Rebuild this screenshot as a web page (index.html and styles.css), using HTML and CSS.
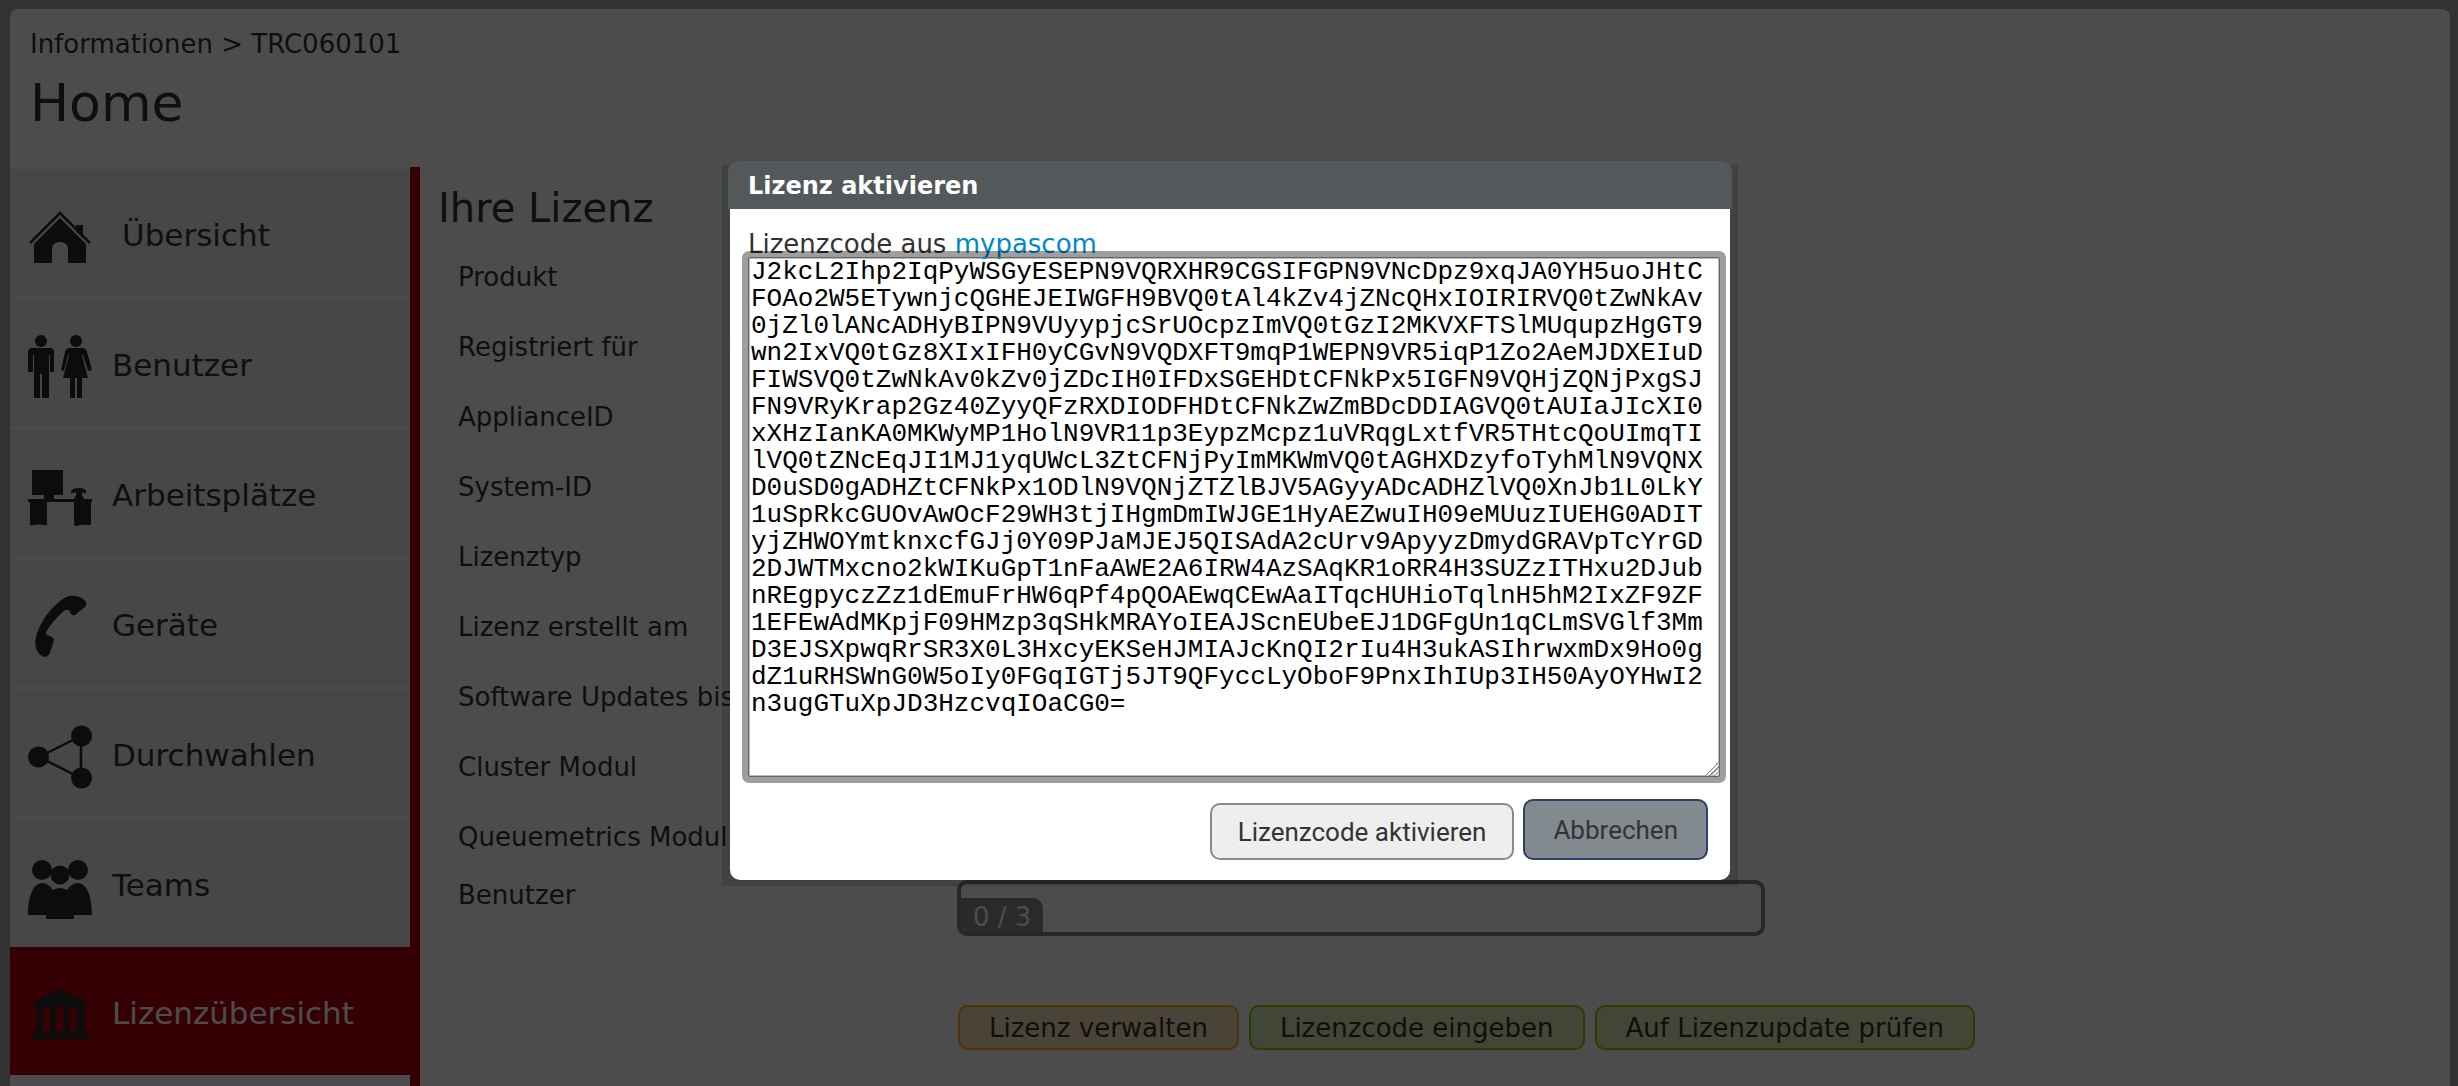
FILE: index.html
```html
<!DOCTYPE html>
<html lang="de">
<head>
<meta charset="utf-8">
<title>Lizenzübersicht</title>
<link rel="stylesheet" href="styles.css">
</head>
<body>
<div class="panel">
  <header class="page-head">
    <p class="breadcrumb">Informationen &gt; TRC060101</p>
    <h1 class="page-title">Home</h1>
  </header>
  <div class="columns">
    <nav class="sidebar">
      <a class="nav-item nav-home" href="#">
        <svg class="icon" viewBox="0 0 64 64"><path d="M2 38 32 8 62 38" fill="none" stroke="currentColor" stroke-width="2.5"/><path d="M6 39 32 13l7 7 19 19v19H40V44c0-4-3-7-8-7s-8 3-8 7v14H6z"/><path d="M48 20h7v13l-7-7z"/></svg>
        <span class="nav-text">Übersicht</span>
      </a>
      <a class="nav-item" href="#">
        <svg class="icon" viewBox="0 0 64 64"><circle cx="13" cy="6" r="6"/><path d="M4 13h18q4 0 4 4v20h-4V20h-1v43h-7V39h-2v24H6V20H5v17H0V17q0-4 4-4z"/><circle cx="48" cy="6" r="6"/><path d="M42 13h12q4 0 5 4l5 18-4 1-5-16h-1l6 23h-6v20h-5V43h-2v20h-5V43h-7l6-23h-1l-4 16-3-1 4-18q1-4 5-4z"/></svg>
        <span class="nav-text">Benutzer</span>
      </a>
      <a class="nav-item" href="#">
        <svg class="icon" viewBox="0 0 64 64"><path d="M4 5h31v25h-9v4h38v3h-1v22q-1 2-3 1-6-1-11 1-3 0-3-2V37H19v22q0 2-3 1-5-1-11 0-3 1-3-1V37H0v-3h16v-4H4z"/><path d="M43 26c1-2 4-3 8-3s6 1 7 3v2h-3l-1-2v4l2 4H46l2-4v-4l-1 2h-4z"/></svg>
        <span class="nav-text">Arbeitsplätze</span>
      </a>
      <a class="nav-item" href="#">
        <svg class="icon" viewBox="0 0 64 64"><path d="M41 1c7-1 14 1 17 6q1 3-1 5l-10 8q-3 1-4-1l-2-4h-4C30 21 20 32 18 38l1 2 5 2q2 1 2 3l-4 13q-2 4-6 4C8 59 6 50 8 42 12 26 27 6 41 1z"/></svg>
        <span class="nav-text">Geräte</span>
      </a>
      <a class="nav-item" href="#">
        <svg class="icon" viewBox="0 0 64 64"><path d="M53 11 11 32l42 21z" fill="none" stroke="currentColor" stroke-width="2.5"/><circle cx="53.500" cy="11" r="10.500"/><circle cx="10.500" cy="32" r="10.500"/><circle cx="53.500" cy="53" r="10.500"/></svg>
        <span class="nav-text">Durchwahlen</span>
      </a>
      <a class="nav-item" href="#">
        <svg class="icon" viewBox="0 0 64 64"><circle cx="14" cy="15" r="10"/><circle cx="50" cy="15" r="10"/><circle cx="32" cy="20" r="9.500"/><path d="M0 60C0 42 5 28 14 28c5 0 8 3 11 7q7-4 14 0c3-4 6-7 11-7 9 0 14 14 14 32H46v4H18v-4z"/></svg>
        <span class="nav-text">Teams</span>
      </a>
      <a class="nav-item nav-active" href="#" aria-current="page">
        <svg class="icon" viewBox="0 0 64 64"><path fill-rule="evenodd" d="M32 6 60 20v1l-4 2v23l5 8v2H3v-2l6-8V23l-5-2v-1zM18.500 24q-4 0-4 4v18q0 4 4 4t4-4V28q0-4-4-4zm13.500 0q-4 0-4 4v18q0 4 4 4t4-4V28q0-4-4-4zm13 0q-4 0-4 4v18q0 4 4 4t4-4V28q0-4-4-4z"/></svg>
        <span class="nav-text">Lizenzübersicht</span>
      </a>
    </nav>
    <main class="content">
      <h2 class="section-title">Ihre Lizenz</h2>
      <dl class="details">
        <dt>Produkt</dt>
        <dt>Registriert für</dt>
        <dt>ApplianceID</dt>
        <dt>System-ID</dt>
        <dt>Lizenztyp</dt>
        <dt>Lizenz erstellt am</dt>
        <dt>Software Updates bis</dt>
        <dt>Cluster Modul</dt>
        <dt>Queuemetrics Modul</dt>
      </dl>
      <div class="usage">
        <span class="usage-label">Benutzer</span>
        <div class="usage-bar"><span class="usage-count">0 / 3</span></div>
      </div>
      <div class="actions">
        <button class="action action-manage" type="button">Lizenz verwalten</button>
        <button class="action" type="button">Lizenzcode eingeben</button>
        <button class="action" type="button">Auf Lizenzupdate prüfen</button>
      </div>
    </main>
  </div>
</div>
<div class="overlay">
  <section class="dialog" role="dialog" aria-labelledby="dialog-title">
    <h2 class="dialog-title" id="dialog-title">Lizenz aktivieren</h2>
    <form class="dialog-body">
      <p class="dialog-text"><label for="code">Lizenzcode aus</label> <a class="link" href="#">mypascom</a></p>
      <textarea class="code" id="code" spellcheck="false">J2kcL2Ihp2IqPyWSGyESEPN9VQRXHR9CGSIFGPN9VNcDpz9xqJA0YH5uoJHtC
FOAo2W5ETywnjcQGHEJEIWGFH9BVQ0tAl4kZv4jZNcQHxIOIRIRVQ0tZwNkAv
0jZl0lANcADHyBIPN9VUyypjcSrUOcpzImVQ0tGzI2MKVXFTSlMUqupzHgGT9
wn2IxVQ0tGz8XIxIFH0yCGvN9VQDXFT9mqP1WEPN9VR5iqP1Zo2AeMJDXEIuD
FIWSVQ0tZwNkAv0kZv0jZDcIH0IFDxSGEHDtCFNkPx5IGFN9VQHjZQNjPxgSJ
FN9VRyKrap2Gz40ZyyQFzRXDIODFHDtCFNkZwZmBDcDDIAGVQ0tAUIaJIcXI0
xXHzIanKA0MKWyMP1HolN9VR11p3EypzMcpz1uVRqgLxtfVR5THtcQoUImqTI
lVQ0tZNcEqJI1MJ1yqUWcL3ZtCFNjPyImMKWmVQ0tAGHXDzyfoTyhMlN9VQNX
D0uSD0gADHZtCFNkPx1ODlN9VQNjZTZlBJV5AGyyADcADHZlVQ0XnJb1L0LkY
1uSpRkcGUOvAwOcF29WH3tjIHgmDmIWJGE1HyAEZwuIH09eMUuzIUEHG0ADIT
yjZHWOYmtknxcfGJj0Y09PJaMJEJ5QISAdA2cUrv9ApyyzDmydGRAVpTcYrGD
2DJWTMxcno2kWIKuGpT1nFaAWE2A6IRW4AzSAqKR1oRR4H3SUZzITHxu2DJub
nREgpyczZz1dEmuFrHW6qPf4pQOAEwqCEwAaITqcHUHioTqlnH5hM2IxZF9ZF
1EFEwAdMKpjF09HMzp3qSHkMRAYoIEAJScnEUbeEJ1DGFgUn1qCLmSVGlf3Mm
D3EJSXpwqRrSR3X0L3HxcyEKSeHJMIAJcKnQI2rIu4H3ukASIhrwxmDx9Ho0g
dZ1uRHSWnG0W5oIy0FGqIGTj5JT9QFyccLyOboF9PnxIhIUp3IH50AyOYHwI2
n3ugGTuXpJD3HzcvqIOaCG0=</textarea>
      <div class="dialog-actions">
        <button class="btn btn-light" type="button">Lizenzcode aktivieren</button>
        <button class="btn btn-dark" type="button">Abbrechen</button>
      </div>
    </form>
  </section>
</div>
</body>
</html>
```
FILE: styles.css
```css
* {
  box-sizing: border-box;
}

body {
  margin: 0;
  height: 100vh;
  overflow: hidden;
  background: #a7a7a7;
  color: #333;
  font-family: "DejaVu Sans", Verdana, sans-serif;
  font-size: 26px;
  line-height: 30px;
}

h1, h2, p, dl {
  margin: 0;
  font-weight: normal;
}

.panel {
  display: flex;
  flex-direction: column;
  min-height: 100vh;
  margin: 9px 8px 0 10px;
  background: #fff;
  border-radius: 8px;
}

.page-head {
  height: 158px;
  padding: 20px;
}

.page-title {
  margin-top: 14px;
  font-size: 52px;
  line-height: 60px;
}

.columns {
  display: flex;
  flex: 1;
}

.sidebar {
  width: 410px;
  flex: none;
  padding-top: 2px;
  border-right: 10px solid #b30010;
}

.nav-item {
  display: flex;
  align-items: center;
  gap: 20px;
  height: 128px;
  margin-bottom: 2px;
  padding: 8px 18px 0;
  background: #eee;
  color: #333;
  font-size: 31px;
  text-decoration: none;
}

.nav-home {
  gap: 30px;
}

.nav-item:nth-last-child(2) {
  margin-bottom: 0;
}

.nav-active {
  background: #b30010;
  color: #fff;
}

.nav-text {
  padding-bottom: 4px;
}

.icon {
  width: 64px;
  height: 64px;
  flex: none;
  fill: currentColor;
  color: #2a2a2a;
}

.content {
  flex: 1;
  padding: 18px;
}

.section-title {
  font-size: 40px;
  line-height: 46px;
}

.details {
  padding: 12px 20px 0;
}

.details dt {
  height: 70px;
  padding-top: 19px;
}

.usage {
  display: flex;
  gap: 20px;
  margin-top: 7px;
  padding-left: 20px;
}

.usage-label {
  width: 479px;
}

.usage-bar {
  display: flex;
  align-items: flex-end;
  width: 808px;
  height: 56px;
  border: 4px solid #7e858a;
  border-radius: 10px;
}

.usage-count {
  padding: 4px 12px 0;
  background: #858c91;
  color: #fff;
  border-top-right-radius: 10px;
}

.actions {
  display: flex;
  gap: 10px;
  margin-top: 69px;
  padding-left: 520px;
}

.action {
  height: 45px;
  padding: 0 29px;
  border: 2px solid #8bd400;
  border-radius: 10px;
  background: #deeab8;
  color: #333;
  font: inherit;
}

.action-manage {
  border-color: #ffb400;
  background: #f8dfbc;
}

.overlay {
  position: fixed;
  inset: 0;
  display: flex;
  justify-content: center;
  align-items: flex-start;
  padding: 161px 8px 0 10px;
  background: rgba(0, 0, 0, .7);
}

.dialog {
  position: relative;
  width: 1004px;
}

.dialog::before {
  content: "";
  position: absolute;
  z-index: -1;
  inset: 4px -6px -6px;
  background: rgba(0, 0, 0, .14);
}

.dialog-title {
  padding: 10px 20px 8px;
  border-radius: 10px 10px 0 0;
  background: #53585b;
  color: #fff;
  font-size: 24px;
  font-weight: bold;
}

.dialog-body {
  margin: 0 2px;
  padding: 20px 10px 20px 18px;
  border-radius: 0 0 10px 10px;
  background: #fff;
}

.dialog-text {
  padding-top: 2px;
  line-height: 26px;
}

.link {
  color: #08c;
  text-decoration: none;
}

.code {
  display: block;
  width: 100%;
  height: 520px;
  padding: 1px 2px;
  border: 1px solid #666;
  border-radius: 1px;
  outline: 6px solid rgba(0, 0, 0, .38);
  box-shadow: inset 0 0 0 1px #bbb;
  background: #fff;
  color: #000;
  font-family: "Liberation Mono", "Courier New", monospace;
  font-size: 26px;
  line-height: 27px;
}

.code::-webkit-scrollbar {
  width: 20px;
  height: 20px;
}

.code::-webkit-resizer {
  background: linear-gradient(135deg, transparent 50%, #888 50%, #888 54%, #ddd 54%, #ddd 58%, transparent 58%, transparent 66%, #888 66%, #888 70%, #ddd 70%, #ddd 74%, transparent 74%, transparent 82%, #888 82%, #888 86%, #ddd 86%, #ddd 90%, transparent 90%);
}

.dialog-actions {
  display: flex;
  justify-content: flex-end;
  align-items: flex-end;
  gap: 9px;
  margin-top: 22px;
  padding-right: 12px;
}

.btn {
  height: 57px;
  padding: 0 26px;
  border: 2px solid #858c91;
  border-radius: 10px;
  color: #333;
  font-family: Roboto, sans-serif;
  font-size: 26px;
}

.btn-light {
  background: #eee;
}

.btn-dark {
  height: 61px;
  padding: 0 28px;
  border-color: #2b406b;
  background: #82898f;
}
```
